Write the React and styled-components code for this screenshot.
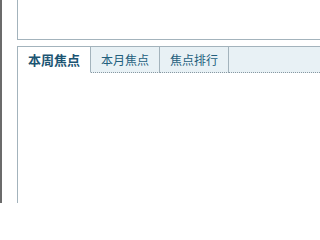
import React from 'react';
import styled, { createGlobalStyle } from 'styled-components';

const GlobalStyle = createGlobalStyle`
  html, body {
    margin: 0;
    padding: 0;
    background: #fff;
  }
  body {
    font-family: "Liberation Sans", "Noto Sans CJK SC", sans-serif;
  }
`

const Page = styled.div`
  display: flex;
  height: 203px;
  overflow: hidden;
`

const Edge = styled.div`
  width: 2px;
  background: #6b6b6b;
  flex-shrink: 0;
`

const Main = styled.div`
  flex: 1;
  margin-left: 15px;
  display: flex;
  flex-direction: column;
  gap: 6px;
`

const TopBox = styled.div`
  height: 39px;
  border-left: 1px solid #a3b3bc;
  border-bottom: 1px solid #a3b3bc;
`

const Panel = styled.div`
  flex: 1;
  border-left: 1px solid #a3b3bc;
  border-top: 1px solid #a3b3bc;
  display: flex;
  flex-direction: column;
`

const TabBar = styled.div`
  display: flex;
  height: 26px;
  background: #e8f1f5;
`

const Tab = styled.div`
  width: ${p => p.$w}px;
  display: flex;
  align-items: center;
  justify-content: center;
  font-size: 12px;
  font-weight: ${p => (p.$active ? 700 : 400)};
  color: ${p => (p.$active ? '#1c5573' : '#235f7d')};
  background: ${p => (p.$active ? '#fff' : 'transparent')};
  border-right: 1px solid #a3b3bc;
  border-bottom: 1px dotted ${p => (p.$active ? 'transparent' : '#8797a1')};
  box-sizing: border-box;
  ${p => p.$active && 'font-size: 13px;'}
`

const Filler = styled.div`
  flex: 1;
  border-bottom: 1px dotted #8797a1;
`

const Body = styled.div`
  flex: 1;
  background: #fff;
`

const tabs = [
  { label: '本周焦点', w: 73, active: true },
  { label: '本月焦点', w: 69 },
  { label: '焦点排行', w: 69 },
]

export default function App() {
  return (
    <>
      <GlobalStyle />
      <Page>
        <Edge />
        <Main>
          <TopBox />
          <Panel>
            <TabBar>
              {tabs.map(t => (
                <Tab key={t.label} $w={t.w} $active={t.active}>{t.label}</Tab>
              ))}
              <Filler />
            </TabBar>
            <Body />
          </Panel>
        </Main>
      </Page>
    </>
  );
}
